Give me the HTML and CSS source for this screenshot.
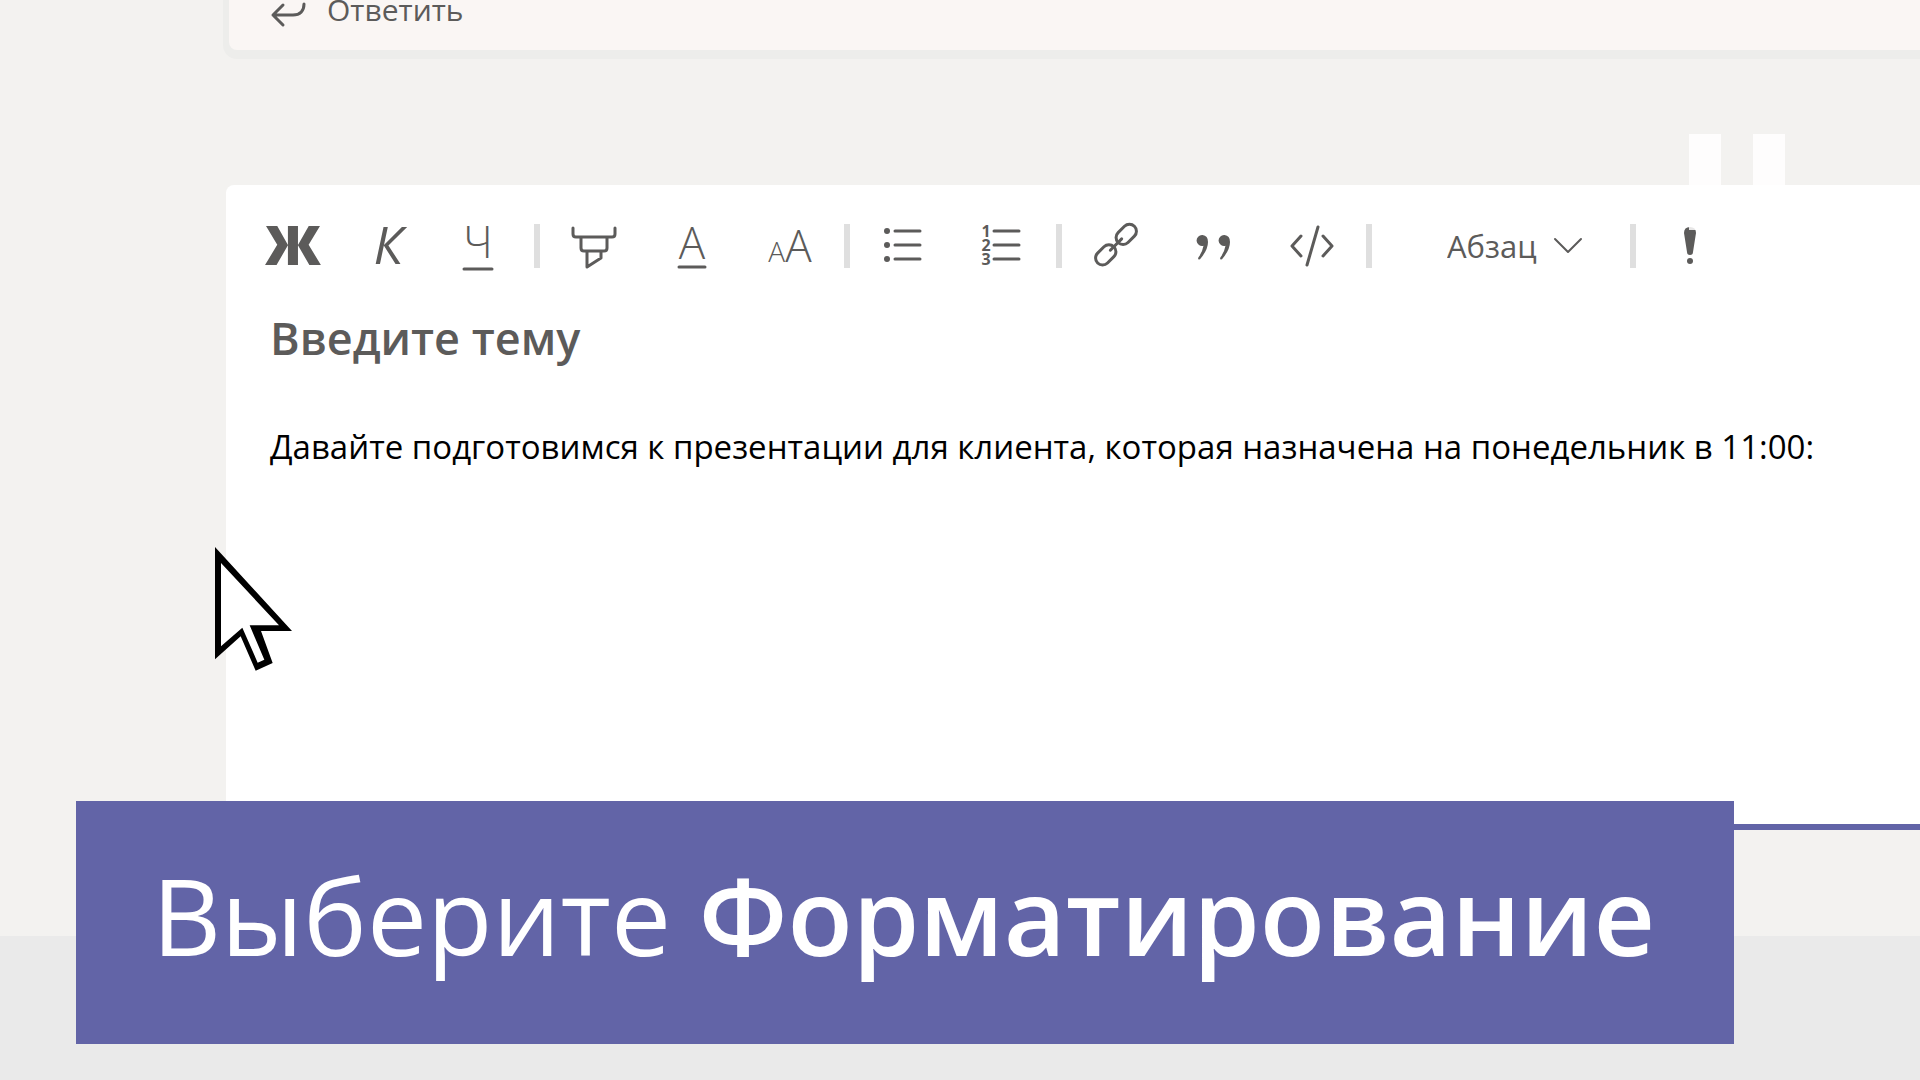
FILE: index.html
```html
<!DOCTYPE html>
<html lang="ru">
<head>
<meta charset="utf-8">
<title>Форматирование сообщения</title>
<link rel="stylesheet" href="styles.css">
</head>
<body>
<div class="page">
  <main class="channel">
    <section class="thread">
      <button class="reply" type="button">
        <svg class="reply-icon" width="34" height="24" viewBox="0 0 34 24" aria-hidden="true"><path d="M11 1 1 11l10 10M1 11h20c7 0 11-4 11-11"/></svg>
        <span>Ответить</span>
      </button>
    </section>

    <form class="composer">
      <div class="toolbar" role="toolbar" aria-label="Форматирование">
        <button class="tool" type="button" aria-label="Полужирный"><svg class="icon" viewBox="0 0 60 60"><text class="glyph glyph-bold" x="30" y="49">Ж</text></svg></button>
        <button class="tool" type="button" aria-label="Курсив"><svg class="icon" viewBox="0 0 60 60"><text class="glyph glyph-italic" x="27" y="48">К</text></svg></button>
        <button class="tool tool-narrow" type="button" aria-label="Подчеркнутый"><svg class="icon" viewBox="0 0 60 60"><text class="glyph" x="30" y="42">Ч</text><path d="M16 53h28"/></svg></button>
        <span class="divider divider-wide"></span>
        <button class="tool" type="button" aria-label="Цвет выделения"><svg class="icon" viewBox="0 0 60 60"><path d="M9 12v6q0 3 3 3h36q3 0 3-3v-6M17 21v11q0 3 3 3h20q3 0 3-3V21M23 35v16l14-9v-7"/></svg></button>
        <button class="tool" type="button" aria-label="Цвет шрифта"><svg class="icon" viewBox="0 0 60 60"><text class="glyph" x="30" y="43">A</text><path d="M17 51h26"/></svg></button>
        <button class="tool" type="button" aria-label="Размер шрифта"><svg class="icon" viewBox="0 0 60 60"><text class="glyph" x="30" y="46"><tspan class="glyph-small">A</tspan>A</text></svg></button>
        <span class="divider"></span>
        <button class="tool" type="button" aria-label="Маркированный список"><svg class="icon" viewBox="0 0 60 60"><path d="M21 15h25M21 29h25M21 43h25"/><g class="solid"><circle cx="13" cy="15" r="3"/><circle cx="13" cy="29" r="3"/><circle cx="13" cy="43" r="3"/></g></svg></button>
        <button class="tool" type="button" aria-label="Нумерованный список"><svg class="icon" viewBox="0 0 60 60"><path d="M22 15h25M22 29h25M22 43h25"/><text class="digit" x="14" y="21">1</text><text class="digit" x="14" y="35">2</text><text class="digit" x="14" y="49">3</text></svg></button>
        <span class="divider"></span>
        <button class="tool" type="button" aria-label="Вставить ссылку"><svg class="icon" viewBox="0 0 60 60"><g transform="rotate(-45 30 30)"><rect x="5" y="22" width="23" height="14" rx="7"/><rect x="34" y="22" width="23" height="14" rx="7"/><path d="M23 29h16"/></g></svg></button>
        <button class="tool" type="button" aria-label="Цитата"><svg class="icon" viewBox="0 0 60 60"><g class="solid"><path d="M18.500 19a5.500 5.500 0 1 0 1 10.800q-1 6-5 11.500-1 2.200.5 2.200 1 0 2-1.500 7-8.500 7-16 0-6.500-5.500-7z"/><path d="M40.500 19a5.500 5.500 0 1 0 1 10.800q-1 6-5 11.500-1 2.200.5 2.200 1 0 2-1.500 7-8.500 7-16 0-6.500-5.500-7z"/></g></svg></button>
        <button class="tool" type="button" aria-label="Фрагмент кода"><svg class="icon" viewBox="0 0 60 60"><path d="M19 20 10 30l9 10M41 20l9 10-9 10M36 11 25 49"/></svg></button>
        <span class="divider"></span>
        <div class="style-picker">
          <select class="style-select" aria-label="Стиль абзаца"><option>Абзац</option></select>
          <svg class="chevron" width="30" height="18" viewBox="0 0 30 18" aria-hidden="true"><path d="m2 2 13 13L28 2"/></svg>
        </div>
        <span class="divider"></span>
        <button class="tool tool-important" type="button" aria-label="Важно"><svg class="icon" viewBox="0 0 60 60"><g class="solid"><path d="M24 17q0-6 6-6t6 6l-3 19q0 3-3 3t-3-3z"/><circle cx="30" cy="45" r="3"/></g></svg></button>
      </div>
      <input class="subject" type="text" placeholder="Введите тему" aria-label="Тема">
      <textarea class="message" rows="7" aria-label="Сообщение">Давайте подготовимся к презентации для клиента, которая назначена на понедельник в 11:00:</textarea>
    </form>
  </main>

  <div class="pause" aria-hidden="true"><span class="pause-bar"></span><span class="pause-bar"></span></div>
  <svg class="cursor" width="80" height="126" viewBox="0 0 240 378" aria-hidden="true"><path d="M0 0 231 252H138l35 96-51 23L77 268 0 337z"/><path class="cursor-fill" d="M18 48 192 235h-88l44 103-20 9L82 242l-64 56z"/></svg>
  <p class="caption">Выберите <strong>Форматирование</strong></p>
</div>
</body>
</html>
```
FILE: styles.css
```css
* {
  box-sizing: border-box;
}

body {
  margin: 0;
  font-family: "Open Sans", "Noto Sans", sans-serif;
  color: #5c5b5a;
  background: #eaeaea;
}

button,
input,
select,
textarea {
  margin: 0;
  padding: 0;
  border: 0;
  outline: 0;
  background: none;
  color: inherit;
  font: inherit;
}

svg {
  display: block;
  fill: none;
  stroke: #5c5b5a;
  stroke-width: 3;
  stroke-linecap: round;
  stroke-linejoin: round;
}

.page {
  position: relative;
  min-height: 100vh;
  overflow: hidden;
}

.channel {
  padding: 0 0 106px 226px;
  background: #f3f2f0;
}

.thread {
  margin-left: 3px;
  padding: 0 43px 22px;
  background: #faf6f4;
  border-radius: 0 0 0 8px;
  box-shadow: 0 3px 0 6px #ededeb;
}

.reply {
  display: flex;
  align-items: flex-end;
  gap: 21px;
  height: 28px;
  font-size: 30px;
  line-height: 36px;
}

.reply-icon {
  overflow: visible;
}

.composer {
  margin-top: 135px;
  padding: 23px 0 0 18px;
  background: #fff;
  border-bottom: 6px solid #6264a7;
  border-radius: 8px 0 0 0;
}

.toolbar {
  display: flex;
  align-items: center;
  height: 76px;
}

.tool {
  display: flex;
  justify-content: center;
  flex: none;
  width: 98px;
}

.tool-narrow {
  width: 76px;
}

.icon {
  width: 60px;
  height: 60px;
  overflow: visible;
}

.solid,
.glyph,
.digit {
  fill: #5c5b5a;
  stroke: none;
}

.glyph {
  font-size: 44px;
  font-weight: 350;
  text-anchor: middle;
}

.glyph-bold {
  font-size: 54px;
  font-weight: 800;
}

.glyph-italic {
  font-size: 52px;
  font-weight: 400;
  font-style: italic;
}

.glyph-small {
  font-size: 28px;
}

.digit {
  font-size: 16px;
  font-weight: 700;
  text-anchor: middle;
}

.divider {
  flex: none;
  width: 6px;
  height: 44px;
  margin: 0 5px;
  background: #dfdfdf;
}

.divider-wide {
  margin-left: 18px;
}

.style-picker {
  display: flex;
  align-items: center;
  gap: 16px;
  margin: 0 42px 0 70px;
}

.style-select {
  appearance: none;
  font-size: 31px;
  line-height: 44px;
}

.chevron {
  stroke-width: 2;
}

.subject,
.message {
  display: block;
  width: 100%;
  padding-left: 26px;
}

.subject {
  height: 80px;
  margin-top: 13px;
  font-size: 45px;
  font-weight: 600;
}

.subject::placeholder {
  color: #5c5b5a;
  opacity: 1;
}

.message {
  margin-top: 41px;
  color: #000;
  font-size: 33px;
  line-height: 58px;
  resize: none;
  overflow: hidden;
}

.pause {
  position: absolute;
  top: 134px;
  right: 135px;
  display: flex;
  gap: 32px;
}

.pause-bar {
  width: 32px;
  height: 96px;
  background: rgba(255, 255, 255, 0.85);
}

.cursor {
  position: absolute;
  top: 547px;
  left: 215px;
  fill: #000;
  stroke: none;
}

.cursor-fill {
  fill: #fff;
}

.caption {
  position: absolute;
  right: 186px;
  bottom: 36px;
  left: 76px;
  margin: 0;
  padding: 34px 0 49px 76px;
  background: #6264a7;
  color: #fff;
  font-size: 107px;
  line-height: 160px;
  white-space: nowrap;
}

.caption strong {
  font-weight: 600;
}
```
